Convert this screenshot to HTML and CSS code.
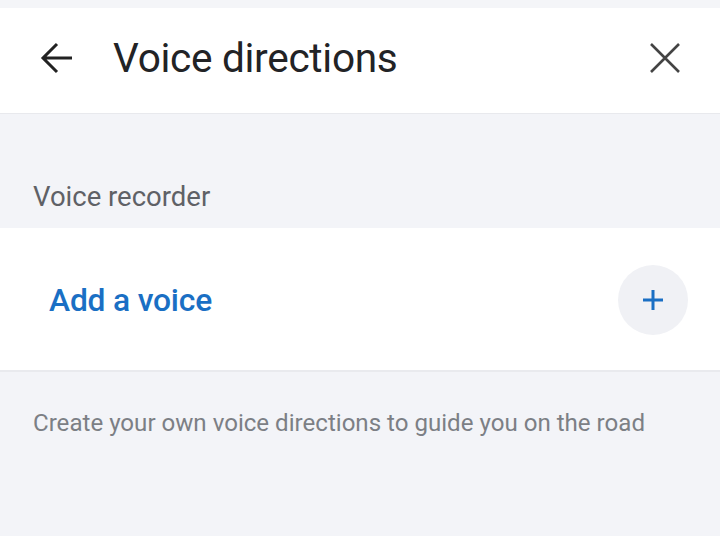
FILE: index.html
```html
<!doctype html>
<html lang="en">
<head>
    <meta charset="utf-8">
    <meta name="viewport" content="width=device-width, initial-scale=1">
    <title>Voice directions</title>
    <link rel="stylesheet" href="styles.css">
</head>
<body>
    <div class="screen">
        <div class="topbar">
            <button class="icon-btn back" aria-label="Back">
                <svg width="34" height="34" viewBox="0 0 34 34"><path d="M33 17H4M18 3L4 17l14 14" fill="none" stroke="#222" stroke-width="3"/></svg>
            </button>
            <h1>Voice directions</h1>
            <button class="icon-btn close" aria-label="Close">
                <svg width="32" height="32" viewBox="0 0 32 32"><path d="M2 2l28 28M30 2L2 30" fill="none" stroke="#444" stroke-width="2.6"/></svg>
            </button>
        </div>

        <div class="section-head">Voice recorder</div>

        <div class="row">
            <span class="row-label">Add a voice</span>
            <button class="add-btn" aria-label="Add a voice">
                <svg width="22" height="22" viewBox="0 0 22 22"><path d="M11 1v20M1 11h20" stroke="#1a6fc4" stroke-width="3"/></svg>
            </button>
        </div>

        <div class="hint">Create your own voice directions to guide you on the road</div>
    </div>
</body>
</html>
```

FILE: styles.css
```css
* {
    box-sizing: border-box;
    font-family: Roboto, "Noto Sans", Arial, sans-serif;
}
body {
    margin: 0;
    background: #fff;
}
.screen {
    width: 720px;
    height: 539px;
    display: flex;
    flex-direction: column;
    border-top: 8px solid #f4f5f8;
}
.topbar {
    height: 106px;
    display: flex;
    align-items: center;
    padding: 0 39px 5px 39px;
    border-bottom: 1px solid #e8e9ed;
}
.icon-btn {
    background: none;
    border: none;
    padding: 0;
    display: flex;
    cursor: pointer;
}
.topbar h1 {
    flex: 1;
    margin: 0 0 0 40px;
    font-size: 40.6px;
    font-weight: 400;
    color: #222326;
    letter-spacing: -0.3px;
}
.section-head {
    height: 114px;
    background: #f3f4f8;
    display: flex;
    align-items: flex-end;
    padding: 0 33px 15px;
    font-size: 27.5px;
    color: #5f6166;
}
.row {
    height: 144px;
    display: flex;
    align-items: center;
    justify-content: space-between;
    padding: 2px 32px 0 49px;
    border-bottom: 2px solid #e9eaee;
}
.row-label {
    font-size: 31.8px;
    font-weight: 500;
    color: #1a6fc4;
    letter-spacing: -0.2px;
}
.add-btn {
    width: 70px;
    height: 70px;
    border-radius: 50%;
    border: none;
    background: #f0f1f5;
    display: flex;
    align-items: center;
    justify-content: center;
    cursor: pointer;
}
.hint {
    height: 164px;
    background: #f3f4f8;
    padding: 37px 33px 0;
    font-size: 24.1px;
    color: #7c7f85;
}
```
